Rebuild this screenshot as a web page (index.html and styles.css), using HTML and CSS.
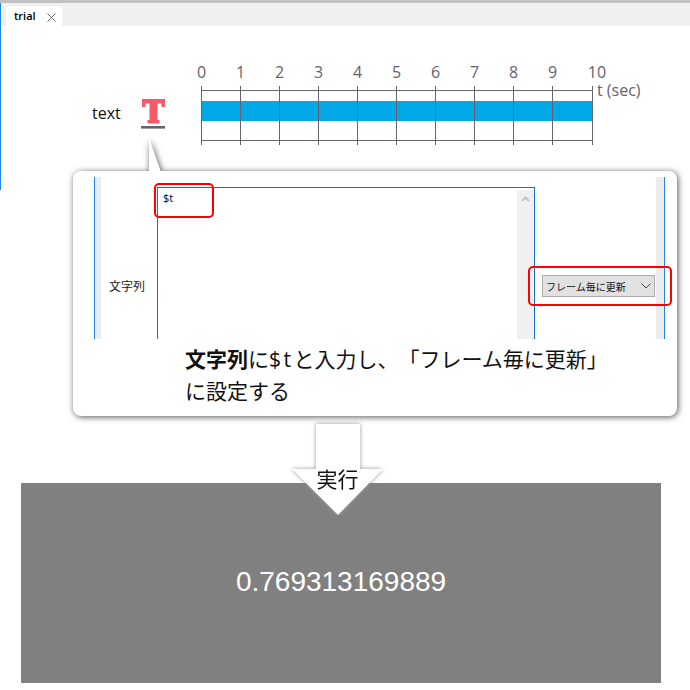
FILE: index.html
```html
<!DOCTYPE html>
<html lang="ja">
<head>
<meta charset="utf-8">
<title>trial</title>
<link rel="stylesheet" href="styles.css">
</head>
<body>
<div class="page">
  <div class="edge"></div>
  <div class="topline"></div>
  <div class="tabbar">
    <div class="tab">
      <span class="tab-name">trial</span>
      <svg class="tab-close" width="9" height="9" viewBox="0 0 9 9"><path d="M.5.5l8 8M8.5.5l-8 8"/></svg>
    </div>
  </div>
  <div class="timeline-row">
    <span class="comp-name">text</span>
    <svg class="comp-icon" width="26" height="32" viewBox="0 0 26 32">
      <path class="t-glyph" d="M1 0H24V8H20.500V4.500H16.500V21H18.500V24.500H6.500V21H8.500V4.500H4.500V8H1Z"/>
      <rect class="t-line" x="0" y="27" width="24" height="2.600"/>
    </svg>
    <svg class="ruler" width="460" height="90" viewBox="190 60 460 90">
      <rect class="bar" x="201" y="101" width="392" height="20"/>
      <path class="axis" d="M201 90.500H592.500M201 140.500H592.500M201.500 86V145M240.500 86V145M279.500 86V145M318.500 86V145M357.500 86V145M396.500 86V145M435.500 86V145M474.500 86V145M513.500 86V145M552.500 86V145M592.500 86V145"/>
      <g class="ticks">
        <text x="201.500" y="78">0</text><text x="240.500" y="78">1</text><text x="279.500" y="78">2</text><text x="318.500" y="78">3</text><text x="357.500" y="78">4</text><text x="396.500" y="78">5</text><text x="435.500" y="78">6</text><text x="474.500" y="78">7</text><text x="513.500" y="78">8</text><text x="552.500" y="78">9</text><text x="597" y="78">10</text>
      </g>
      <text class="unit" x="597" y="96">t (sec)</text>
    </svg>
  </div>
  <div class="callout">
    <div class="pointer"></div>
    <div class="form">
      <div class="band"></div>
      <div class="field-label">文字列</div>
      <div class="textbox">
        <span class="textbox-value">$t</span>
        <div class="scrollbar">
          <svg width="9" height="6" viewBox="0 0 9 6"><path d="M1 5l3.500-3.500L8 5"/></svg>
        </div>
      </div>
      <div class="select">
        <span>フレーム毎に更新</span>
        <svg width="10" height="6" viewBox="0 0 10 6"><path d="M.5.5L5 5 9.500.5"/></svg>
      </div>
      <div class="band band-right"></div>
    </div>
    <div class="mark mark-text"></div>
    <div class="mark mark-select"></div>
    <p class="note"><b>文字列</b>に<span class="note-var">$t</span>と入力し、「フレーム毎に更新」<br>に設定する</p>
  </div>
  <div class="stage">0.769313169889</div>
  <svg class="arrow" width="110" height="110" viewBox="0 0 110 110">
    <path class="arrow-shape" d="M29 5H73V50H96L51 96 5 50H29Z"/>
    <text class="arrow-label" x="50.500" y="68">実行</text>
  </svg>
</div>
</body>
</html>
```
FILE: styles.css
```css
* { box-sizing: border-box; }
html, body { margin: 0; padding: 0; background: #fff; }
body { font-family: "Open Sans", "Noto Sans CJK JP", sans-serif; color: #000; }
.page { position: relative; width: 690px; height: 690px; overflow: hidden; background: #fff; }
.edge { position: absolute; left: 0; top: 3px; width: 1px; height: 187px; background: #1e88e5; }
.topline { height: 3px; background: #c2c2c2; }
.tabbar { height: 23px; padding-left: 6px; padding-top: 3px; background: #f0f0f0; }
.tab { width: 56px; height: 20px; background: #fff; border-radius: 3px 3px 0 0; display: flex; align-items: center; padding-left: 8px; }
.tab-name { font-size: 11px; font-weight: 600; width: 33px; line-height: 14px; margin-top: -1px; }
.tab-close { margin-top: 3px; }
.tab-close path { stroke: #666; stroke-width: 1; fill: none; }
.timeline-row { height: 145px; display: flex; align-items: flex-start; }
.comp-name { margin: 76px 0 0 92px; width: 49px; font-size: 16px; line-height: 22px; color: #111; }
.comp-icon { margin-top: 73px; }
.t-glyph { fill: #f45b69; }
.t-line { fill: #66626e; }
.ruler { margin: 34px 0 0 23px; }
.bar { fill: #00a8e8; }
.axis { fill: none; stroke: #66626e; stroke-width: 1; }
.ticks text { font-size: 16px; fill: #66626e; text-anchor: middle; }
.unit { font-size: 16px; fill: #66626e; }
.callout { position: relative; width: 604px; height: 245px; margin-left: 73px; padding: 6px 12px 0 21px; background: #fff; border-radius: 8px; filter: drop-shadow(1px 1px 3px #555); }
.pointer { position: absolute; left: 76px; top: -33px; width: 12px; height: 34px; background: #fff; clip-path: polygon(0 0, 100% 100%, 0 100%); }
.form { display: flex; align-items: flex-start; height: 162px; }
.band { width: 7px; height: 162px; border-left: 1px solid #1e88e5; background: #ececec; }
.band-right { width: 9px; margin-left: 1px; border-left: 0; border-right: 1px solid #1e88e5; }
.field-label { width: 56px; margin-top: 102px; padding-left: 8px; font-size: 12px; line-height: 16px; color: #222; }
.textbox { position: relative; width: 378px; height: 152px; margin-top: 10px; padding: 2px 0 0 5px; border: 1px solid #1272c4; border-bottom: 0; }
.textbox-value { font-size: 11px; line-height: 16px; display: block; }
.scrollbar { position: absolute; right: 0; top: 2px; bottom: 0; width: 17px; background: #f0f0f0; display: flex; justify-content: center; align-items: flex-start; padding-top: 6px; }
.scrollbar path { fill: none; stroke: #c4c4c4; stroke-width: 2; }
.select { width: 113px; height: 22px; margin: 98px 0 0 7px; padding: 0 3px 0 3px; display: flex; align-items: center; justify-content: space-between; background: #e1e1e1; border: 1px solid #adadad; font-size: 10px; color: #111; }
.select path { fill: none; stroke: #444; stroke-width: 1; }
.mark { position: absolute; border: 2px solid #f00; border-radius: 5px; }
.mark-text { left: 81px; top: 12px; width: 60px; height: 35px; }
.mark-select { left: 455px; top: 95px; width: 144px; height: 40px; }
.note { margin: 4px 0 0 91px; font-size: 21px; line-height: 32px; color: #111; text-spacing-trim: space-all; font-family: "Open Sans", "Noto Sans CJK JP", sans-serif; white-space: nowrap; }
.note-var { letter-spacing: 2.5px; }
.stage { width: 640px; height: 200px; margin: 67px 0 0 21px; padding-bottom: 2px; display: flex; align-items: center; justify-content: center; background: #808080; color: #fff; font-family: "Liberation Sans", Arial, sans-serif; font-size: 28px; }
.arrow { position: absolute; left: 287px; top: 419px; }
.arrow-shape { fill: #fff; filter: drop-shadow(0 0 2px #999); }
.arrow-label { font-size: 21px; text-anchor: middle; fill: #111; text-spacing-trim: space-all; font-family: "Noto Sans CJK JP", sans-serif; }
```
